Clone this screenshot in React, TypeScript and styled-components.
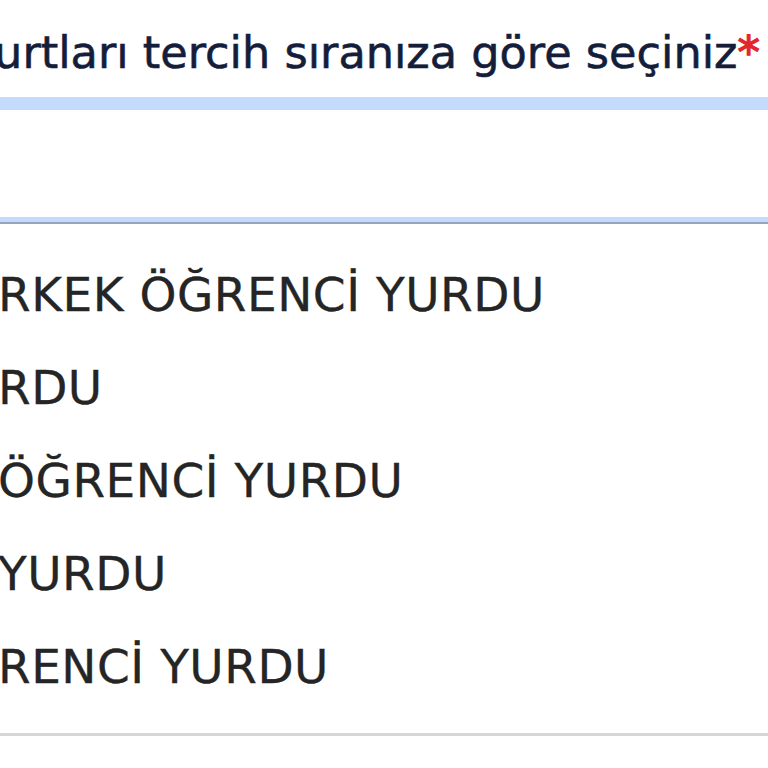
import React from "react";
import styled, { createGlobalStyle } from "styled-components";

const GlobalStyle = createGlobalStyle`
  html, body {
    margin: 0;
    padding: 0;
    background: #ffffff;
    overflow: hidden;
  }
  body {
    font-family: "DejaVu Sans", "Noto Sans", sans-serif;
  }
`;

const dorms = [
  "RKEK ÖĞRENCİ YURDU",
  "RDU",
  "ÖĞRENCİ YURDU",
  "YURDU",
  "RENCİ YURDU",
];

function App() {
  return (
    <>
      <GlobalStyle />
      <Form>
        <Label>
          Yurtları tercih sıranıza göre seçiniz<Required>*</Required>
        </Label>
        <SearchInput type="text" aria-label="Yurt ara" />
        <OptionList role="listbox">
          {dorms.map((name) => (
            <Option key={name} role="option">
              {name}
            </Option>
          ))}
        </OptionList>
      </Form>
    </>
  );
}

const Form = styled.form`
  width: 900px;
  margin-left: -28px;
  padding-top: 25px;
  display: flex;
  flex-direction: column;
`;

const Label = styled.label`
  font-size: 44.6px;
  line-height: 56px;
  color: #141d3a;
  -webkit-text-stroke: 0.6px #141d3a;
  white-space: nowrap;
  margin-bottom: 16px;
`;

const Required = styled.span`
  color: #e3262b;
  -webkit-text-stroke: 1.4px #e3262b;
`;

const SearchInput = styled.input`
  box-sizing: border-box;
  height: 125px;
  margin: 0;
  padding: 0 26px;
  border: 0;
  border-top: 13px solid #c4dbfd;
  border-bottom: 5px solid #c4dbfd;
  background: #ffffff;
  outline: none;
  font-family: inherit;
  font-size: 46px;
`;

const OptionList = styled.ul`
  list-style: none;
  margin: 0;
  padding: 24px 0 20px;
  border-top: 2px solid #95a4c1;
  border-bottom: 3px solid #d6d6d6;
  background: #ffffff;
`;

const Option = styled.li`
  height: 93px;
  line-height: 93px;
  padding-left: 26px;
  font-size: 47px;
  letter-spacing: 0.5px;
  color: #252525;
  -webkit-text-stroke: 0.3px #252525;
  white-space: nowrap;
`;

export default App;
